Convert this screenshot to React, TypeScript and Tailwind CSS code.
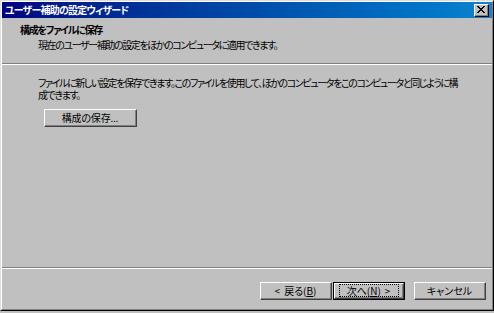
const FONT = "font-['MS_UI_Gothic','Noto_Sans_CJK_JP',sans-serif] [font-feature-settings:'palt']";

function WinButton({
  children,
  isDefault,
  className = "",
}: {
  children: React.ReactNode;
  isDefault?: boolean;
  className?: string;
}) {
  return (
    <div
      className={
        "bg-[#c0c0c0] " +
        (isDefault ? "border border-black " : "") +
        className
      }
    >
      <div className="h-full w-full border border-t-white border-l-white border-r-[#404040] border-b-[#404040]">
        <div className="h-full w-full border-r border-b border-r-[#808080] border-b-[#808080] flex items-center justify-center">
          {isDefault ? (
            <span className="border border-dotted border-black w-[60px] text-center leading-[11px]">{children}</span>
          ) : (
            <span className="leading-[11px]">{children}</span>
          )}
        </div>
      </div>
    </div>
  );
}

export default function App() {
  return (
    <div className={`w-[494px] h-[313px] bg-[#c0c0c0] text-[10px] text-black ${FONT}`}>
      <div className="h-[311px] w-full border border-t-[#dfdfdf] border-l-[#dfdfdf] border-r-black border-b-black flex flex-col">
        <div className="flex-1 flex flex-col border border-t-white border-l-white border-r-[#808080] border-b-[#808080]">
          {/* title bar */}
          <div className="h-[16px] bg-gradient-to-r from-[#000080] to-[#1084d0] flex items-center justify-between pl-[3px] pr-[3px]">
            <span className="text-white font-bold text-[10px] leading-none tracking-[-0.8px]">
              ユーザー補助の設定ウィザード
            </span>
            <div className="w-[15px] h-[13px] bg-[#c0c0c0] border border-t-white border-l-white border-r-black border-b-black">
              <div className="w-full h-full border-r border-b border-r-[#808080] border-b-[#808080] flex items-center justify-center">
                <svg width="8" height="7" viewBox="0 0 8 7" shapeRendering="crispEdges">
                  <path d="M0 0h2v1H0zM6 0h2v1H6zM1 1h2v1H1zM5 1h2v1H5zM2 2h4v1H2zM3 3h2v1H3zM2 4h4v1H2zM1 5h2v1H1zM5 5h2v1H5zM0 6h2v1H0zM6 6h2v1H6z" fill="#000" />
                </svg>
              </div>
            </div>
          </div>

          {/* header */}
          <div className="h-[45px] pl-[18px] pt-[5px] flex flex-col">
            <div className="font-bold leading-[13px] tracking-[-1.3px]">構成をファイルに保存</div>
            <div className="pl-[18px] mt-[2px] leading-[13px] tracking-[-1.4px]">
              現在のユーザー補助の設定をほかのコンピュータに適用できます。
            </div>
          </div>
          <div className="h-px bg-[#808080]" />
          <div className="h-px bg-white" />

          {/* body */}
          <div className="flex-1 pl-[36px] pt-[12px] flex flex-col">
            <p className="leading-[12px] whitespace-nowrap tracking-[-1.4px]">
              ファイルに新しい設定を保存できます。このファイルを使用して、ほかのコンピュータをこのコンピュータと同じように構
              <br />
              成できます。
            </p>
            <WinButton className="w-[93px] h-[18px] mt-[8px] ml-[6px] tracking-[-0.2px]">構成の保存...</WinButton>
          </div>

          <div className="h-px bg-[#808080]" />
          <div className="h-px bg-white" />

          {/* footer */}
          <div className="h-[40px] flex items-start justify-end pt-[13px] pr-[6px]">
            <WinButton className="w-[72px] h-[18px]">
              <span className="mr-[4px]">&lt;</span>戻る(<u>B</u>)
            </WinButton>
            <WinButton isDefault className="w-[72px] h-[18px] ml-px">
              次へ(<u>N</u>)<span className="ml-[4px]">&gt;</span>
            </WinButton>
            <WinButton className="w-[72px] h-[18px] ml-[9px]">キャンセル</WinButton>
          </div>
        </div>
      </div>
    </div>
  );
}
